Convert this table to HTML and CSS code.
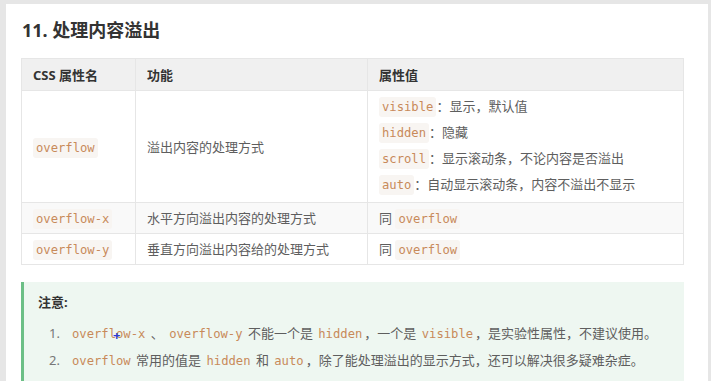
FILE: index.html
```html
<!DOCTYPE html>
<html lang="zh">
<head>
<meta charset="utf-8">
<title>处理内容溢出</title>
<link rel="stylesheet" href="styles.css">
</head>
<body>
<div class="page">
  <h2 class="title">11. 处理内容溢出</h2>
  <table class="props">
    <thead>
      <tr><th class="c1">CSS 属性名</th><th class="c2">功能</th><th class="c3">属性值</th></tr>
    </thead>
    <tbody>
      <tr class="tall">
        <td><code>overflow</code></td>
        <td>溢出内容的处理方式</td>
        <td class="vals">
          <div class="val"><code>visible</code>：显示，默认值</div>
          <div class="val"><code>hidden</code>：隐藏</div>
          <div class="val"><code>scroll</code>：显示滚动条，不论内容是否溢出</div>
          <div class="val"><code>auto</code>：自动显示滚动条，内容不溢出不显示</div>
        </td>
      </tr>
      <tr class="alt">
        <td><code>overflow-x</code></td>
        <td>水平方向溢出内容的处理方式</td>
        <td>同 <code>overflow</code></td>
      </tr>
      <tr>
        <td><code>overflow-y</code></td>
        <td>垂直方向溢出内容给的处理方式</td>
        <td>同 <code>overflow</code></td>
      </tr>
    </tbody>
  </table>
  <div class="note">
    <div class="note-title">注意:</div>
    <ol class="note-list">
      <li><code>overflow-x</code> 、 <code>overflow-y</code> 不能一个是 <code>hidden</code>，一个是 <code>visible</code>，是实验性属性，不建议使用。</li>
      <li><code>overflow</code> 常用的值是 <code>hidden</code> 和 <code>auto</code>，除了能处理溢出的显示方式，还可以解决很多疑难杂症。</li>
    </ol>
    <span class="cursor">+</span>
  </div>
</div>
</body>
</html>
```
FILE: styles.css
```css
html, body {
  margin: 0;
  padding: 0;
}
body {
  background: #e6e6e6;
  font-family: "Noto Sans", "Noto Sans CJK SC", sans-serif;
  color: #5e5e5e;
  font-size: 13px;
  overflow: hidden;
}
.page {
  margin: 4px 3px 0 6px;
  background: #fff;
  min-height: 377px;
  padding: 14px 24px 0 15px;
  box-sizing: border-box;
}
.title {
  margin: 0;
  font-size: 18px;
  line-height: 24px;
  font-weight: 700;
  color: #333;
  padding-left: 1px;
}
.props {
  margin-top: 16px;
  width: 663px;
  border-collapse: collapse;
  table-layout: fixed;
}
.props th, .props td {
  border: 1px solid #e6e6e6;
  text-align: left;
  padding: 0 11px;
  vertical-align: middle;
}
.props th {
  background: #f0f0f0;
  color: #333;
  font-weight: 700;
  height: 31px;
  line-height: 20px;
}
.c1 { width: 91px; }
.c2 { width: 209px; }
.props td {
  height: 30px;
  line-height: 20px;
}
.props tr.alt td {
  background: #f9f9f9;
}
.props td.vals {
  padding-top: 2px;
  padding-bottom: 5px;
}
.val {
  height: 26px;
  line-height: 26px;
}
code {
  font-family: "DejaVu Sans Mono", "Liberation Mono", monospace;
  font-size: 12.2px;
  line-height: 1;
  color: #c88a5a;
  background: #f8f5f2;
  padding: 3px 3px;
  border-radius: 3px;
}
.note {
  position: relative;
  margin-top: 17px;
  width: 663px;
  box-sizing: border-box;
  background: #eef7f1;
  border-left: 3px solid #6cbf86;
  padding: 10px 14px 12px 14px;
  min-height: 100px;
}
.note-title {
  font-weight: 700;
  color: #333;
  line-height: 20px;
}
.note-list {
  list-style: none;
  margin: 8px 0 0;
  padding: 0 0 0 11px;
  counter-reset: n;
}
.note-list li {
  counter-increment: n;
  height: 27px;
  line-height: 27px;
  white-space: nowrap;
}
.note-list li::before {
  content: counter(n) ".";
  display: inline-block;
  width: 21px;
  color: #777;
}
.note-list code {
  background: transparent;
  padding: 0 2px;
}
.cursor {
  position: absolute;
  left: 89px;
  top: 47px;
  color: #2b3bd8;
  font-size: 13px;
  font-weight: 700;
  line-height: 13px;
}
```
